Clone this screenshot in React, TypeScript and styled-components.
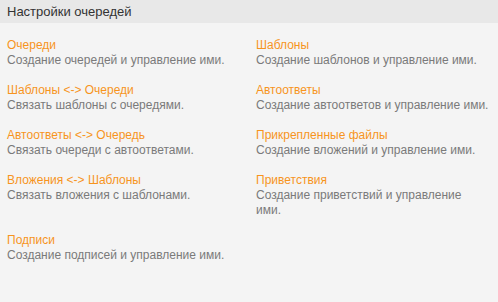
import React from 'react';
import styled, { createGlobalStyle } from 'styled-components';

const GlobalStyle = createGlobalStyle`
  html, body {
    margin: 0;
    padding: 0;
    background: #f4f4f4;
  }
  body {
    font-family: "Liberation Sans", Arial, sans-serif;
  }
`;

const Panel = styled.div`
  width: 498px;
  height: 302px;
  background: #f4f4f4;
  box-sizing: border-box;
`;

const Header = styled.div`
  height: 23px;
  line-height: 23px;
  padding: 0 7px;
  background: #e8e8e8;
  color: #333333;
  font-size: 13px;
`;

const Grid = styled.div`
  display: grid;
  grid-template-columns: 249px 233px;
  row-gap: 15px;
  padding: 15px 0 0 7px;
`;

const Item = styled.div`
  font-size: 12px;
  line-height: 15px;
`;

const Title = styled.a`
  display: block;
  color: #f7941d;
  text-decoration: none;
  cursor: pointer;
`;

const Desc = styled.div`
  color: #7a7a7a;
`;

const items = [
  { title: 'Очереди', desc: 'Создание очередей и управление ими.' },
  { title: 'Шаблоны', desc: 'Создание шаблонов и управление ими.' },
  { title: 'Шаблоны <-> Очереди', desc: 'Связать шаблоны с очередями.' },
  { title: 'Автоответы', desc: 'Создание автоответов и управление ими.' },
  { title: 'Автоответы <-> Очередь', desc: 'Связать очереди с автоответами.' },
  { title: 'Прикрепленные файлы', desc: 'Создание вложений и управление ими.' },
  { title: 'Вложения <-> Шаблоны', desc: 'Связать вложения с шаблонами.' },
  { title: 'Приветствия', desc: 'Создание приветствий и управление ими.' },
  { title: 'Подписи', desc: 'Создание подписей и управление ими.' },
];

const App = () => {
  return (
    <Panel>
      <GlobalStyle />
      <Header>Настройки очередей</Header>
      <Grid>
        {items.map((it) => (
          <Item key={it.title}>
            <Title>{it.title}</Title>
            <Desc>{it.desc}</Desc>
          </Item>
        ))}
      </Grid>
    </Panel>
  );
};

export default App;
